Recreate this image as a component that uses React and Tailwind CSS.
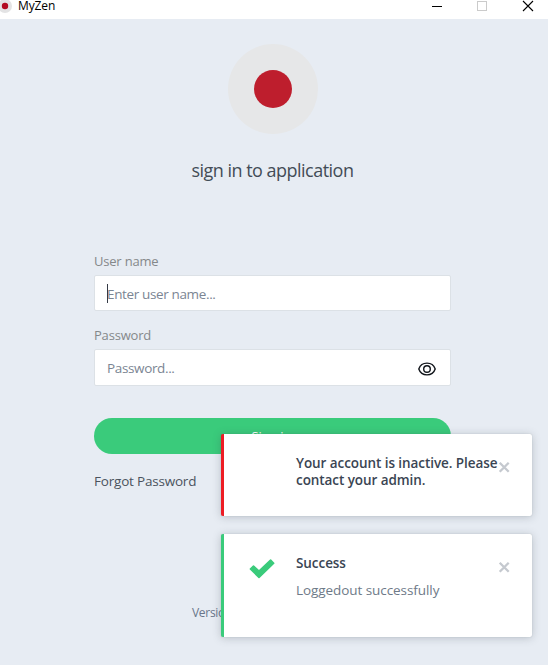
import React from "react";

function CloseIcon() {
  return (
    <svg width="12" height="12" viewBox="0 0 12 12" stroke="#c5c9cf" strokeWidth="2.3" className="block">
      <path d="M1.7 1.7 10.7 10.7M10.7 1.7 1.7 10.7" />
    </svg>
  );
}

function TitleBar() {
  return (
    <header className="flex h-[19px] shrink-0 items-start bg-white">
      <svg width="13" height="13" viewBox="0 0 13 13" className="-ml-px block">
        <circle cx="6" cy="6" r="7" fill="#e3e3e4" />
        <circle cx="6" cy="6" r="3.2" fill="#b30b21" />
      </svg>
      <span className="ml-[6px] text-[12px] leading-[12px] tracking-[-0.1px] text-black">MyZen</span>
      <svg width="116" height="12" viewBox="0 0 116 12" fill="none" className="ml-auto block" shapeRendering="crispEdges">
        <path d="M0 6.5h10" stroke="#000" />
        <path d="M45.5 1.5h9v9h-9z" stroke="#cbcbcb" />
        <path d="M91 1l10 10M101 1l-10 10" stroke="#000" strokeWidth="1.1" shapeRendering="auto" />
      </svg>
    </header>
  );
}

function Field({ label, placeholder, className, textClass, children }) {
  return (
    <label className="block">
      <span className="block h-[18px] text-[13px] leading-[18px] tracking-[-0.2px] text-[#85888a]">{label}</span>
      <span className={"mt-[5px] flex items-center rounded-[2px] border border-[#dce1e6] bg-white pl-[12px] pr-[14px] " + className}>
        <span className={"whitespace-nowrap text-[13.5px] leading-[18px] tracking-[-0.36px] text-[#7b8593] " + textClass}>{placeholder}</span>
        {children}
      </span>
    </label>
  );
}

function Toast({ className, icon, children }) {
  return (
    <section className={"flex rounded-[2px] border-l-[3px] bg-white shadow-[0_0_1px_rgba(60,70,80,0.3),0_1px_9px_rgba(60,70,80,0.27)] " + className}>
      <div className="w-[72px] shrink-0 pl-[25px] pt-[24px]">{icon}</div>
      <div className="w-[202px] shrink-0 whitespace-nowrap">{children}</div>
      <div className="pt-[27px]"><CloseIcon /></div>
    </section>
  );
}

export default function App() {
  return (
    <div className="relative flex h-[666px] w-[548px] flex-col overflow-hidden bg-white font-['Open_Sans','Noto_Sans',sans-serif]">
      <TitleBar />
      <main className="h-[646px] bg-[#e7ecf3] pl-[94px] pt-[25px]">
        <div className="w-[357px]">
          <div className="ml-[134px] flex h-[90px] w-[90px] items-center justify-center rounded-full bg-[#e6e7e8]">
            <div className="h-[38px] w-[38px] rounded-full bg-[#be1e2d]" />
          </div>
          <h1 className="mt-[24px] pl-[97.5px] text-[18px] leading-[24px] tracking-[-0.52px] whitespace-nowrap text-[#434c57]">sign in to application</h1>
          <div className="mt-[70px]">
            <Field label="User name" placeholder="Enter user name..." className="relative h-[36px]" textClass="relative top-px">
              <span className="absolute left-[12px] top-[8px] h-[19px] w-px bg-[#343a45]" />
            </Field>
          </div>
          <div className="mt-[15px]">
            <Field label="Password" placeholder="Password..." className="h-[37px]" textClass="">
              <svg width="18" height="14" viewBox="0 0 18 14" fill="none" stroke="#11151b" strokeWidth="1.4" className="ml-auto mt-[2px] block">
                <path d="M.8 7C2.1 3.2 5.2 1.1 9 1.1S15.9 3.2 17.2 7C15.9 10.8 12.8 12.9 9 12.9S2.1 10.8.8 7Z" />
                <circle cx="9" cy="7" r="3.3" />
              </svg>
            </Field>
          </div>
          <button className="mt-[32px] block h-[36px] w-full rounded-full bg-[#3acb7b] pr-[2px] text-[13px] leading-[37px] text-white">Sign in</button>
          <a className="mt-[18px] block text-[13.5px] leading-[18px] tracking-[-0.2px] whitespace-nowrap text-[#4b535e]">Forgot Password</a>
          <p className="mt-[115px] pl-[98px] text-[12px] leading-[16px] tracking-[-0.3px] text-[#69768a]">Version 1.0.0</p>
        </div>
      </main>
      <div className="absolute left-[221px] top-[434px] flex w-[311px] flex-col gap-[18px]">
        <Toast className="h-[82px] border-[#ed1c24]">
          <p className="pt-[21px] text-[13.5px] font-semibold leading-[17px] tracking-[-0.07px] text-[#3a4553]">
            <span className="block">Your account is inactive. Please</span>
            <span className="block">contact your admin.</span>
          </p>
        </Toast>
        <Toast
          className="h-[103px] border-[#3acb7b]"
          icon={
            <svg width="26" height="21" viewBox="0 0 26 21" fill="#3acb7b" stroke="#3acb7b" strokeWidth="1.6" strokeLinejoin="round" className="block">
              <path d="M1.4 11 4.5 8 10 13.2 21.6 2 24.7 5.2 10 19.4Z" />
            </svg>
          }
        >
          <h2 className="pt-[20px] text-[13.5px] font-semibold leading-[18px] tracking-[-0.07px] text-[#3a4553]">Success</h2>
          <p className="mt-[9px] text-[13.5px] leading-[18px] tracking-[-0.07px] text-[#6e7a88]">Loggedout successfully</p>
        </Toast>
      </div>
    </div>
  );
}
